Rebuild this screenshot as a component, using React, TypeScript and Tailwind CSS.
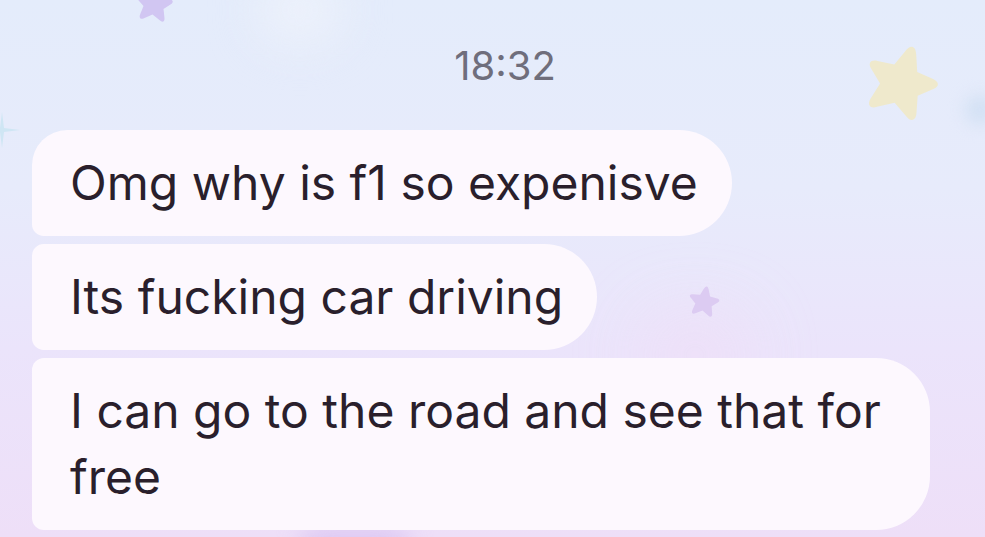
import React from "react";

function Star({ className, color, rotate = 0 }: { className: string; color: string; rotate?: number }) {
  return (
    <svg viewBox="0 0 100 100" className={className} style={{ transform: `rotate(${rotate}deg)` }}>
      <path
        d="M50 6 C53 6 55 9 57 14 L64 32 L84 34 C92 35 94 40 88 45 L73 58 L78 78 C80 86 75 90 68 85 L50 74 L32 85 C25 90 20 86 22 78 L27 58 L12 45 C6 40 8 35 16 34 L36 32 L43 14 C45 9 47 6 50 6 Z"
        fill={color}
      />
    </svg>
  );
}

function Bubble({ children, shape, width }: { children: React.ReactNode; shape: string; width?: string }) {
  return (
    <div
      className={`bg-[#fdf8fe] pl-[38px] pr-[34px] py-[20px] text-[48px] leading-[66px] text-[#2a1f2c] ${shape} ${width ?? ""}`}
    >
      {children}
    </div>
  );
}

export default function App() {
  const font = { fontFamily: 'Inter, "Noto Sans", sans-serif' };
  return (
    <div
      className="relative w-[985px] h-[537px] overflow-hidden bg-[linear-gradient(180deg,#e4ecfb_0%,#e7ebfb_35%,#ebe4fb_65%,#eedff8_100%)]"
      style={font}
    >
      {/* decorations */}
      <div className="absolute left-[650px] top-[325px] w-[90px] h-[60px] rounded-full bg-[#f3d8f3] blur-2xl opacity-70" />
      <div className="absolute left-[300px] top-[525px] w-[110px] h-[40px] rounded-full bg-[#d9c4f2] blur-md opacity-80" />
      <div className="absolute left-[260px] top-[-20px] w-[80px] h-[60px] rounded-full bg-[#eef2fb] blur-xl" />
      <Star className="absolute left-[132px] top-[-18px] w-[44px] h-[44px] opacity-80" color="#cdbdf0" rotate={8} />
      <Star className="absolute left-[858px] top-[40px] w-[86px] h-[86px]" color="#efe9cc" rotate={18} />
      <Star className="absolute left-[686px] top-[284px] w-[36px] h-[36px]" color="#dccbf2" rotate={10} />
      <svg className="absolute left-[-10px] top-[110px] w-[34px] h-[40px]" viewBox="0 0 34 40">
        <path d="M12 2 L14 18 L30 20 L14 22 L12 38 L10 22 L-4 20 L10 18 Z" fill="#cfe6f4" />
      </svg>
      <div className="absolute left-[965px] top-[95px] w-[30px] h-[30px] rounded-full bg-[#d3e1f4] blur-sm" />

      <div className="relative flex flex-col">
        <div className="h-[130px] flex justify-center pt-[44px] pl-[25px]">
          <span className="text-[40px] leading-[44px] text-[#6f6e7c]">18:32</span>
        </div>
        <div className="flex flex-col gap-[8px] items-start pl-[32px]">
          <Bubble shape="rounded-tl-[36px] rounded-bl-[12px] rounded-r-[54px]">Omg why is f1 so expenisve</Bubble>
          <Bubble shape="rounded-l-[12px] rounded-r-[54px]">Its fucking car driving</Bubble>
          <Bubble shape="rounded-l-[12px] rounded-r-[54px]" width="w-[898px]">
            I can go to the road and see that for free
          </Bubble>
        </div>
      </div>
    </div>
  );
}
